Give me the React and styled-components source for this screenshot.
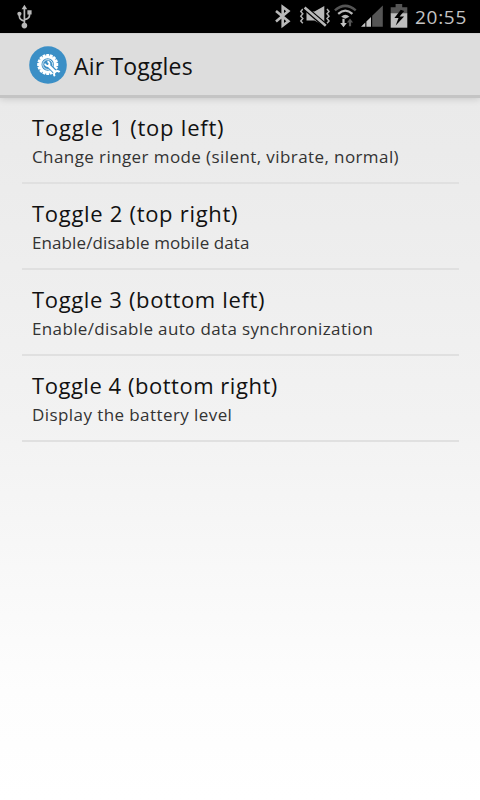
import React from "react";
import styled, { createGlobalStyle } from "styled-components";

const GlobalStyle = createGlobalStyle`
  * { box-sizing: border-box; }
  body { margin: 0; background: #fff; }
`;

const Screen = styled.div`
  width: 480px;
  height: 800px;
  display: flex;
  flex-direction: column;
  overflow: hidden;
  font-family: "Open Sans", "Noto Sans", sans-serif;
  background: linear-gradient(#e8e8e8 0, #ebebeb 150px, #f2f2f2 420px, #fdfdfd 690px, #fff 800px);
`;

const StatusBar = styled.header`
  height: 33px;
  flex: none;
  display: flex;
  align-items: flex-start;
  background: #000;
  color: #c4c4c4;
`;

const StatusIcon = styled.svg`
  display: block;
  flex: none;
  width: ${(p) => p.$w}px;
  height: 33px;
  margin-left: ${(p) => p.$gap || 0}px;
`;

const Spacer = styled.div`
  flex: 1;
`;

const Clock = styled.time`
  width: 71px;
  padding-left: 6px;
  font-size: 19px;
  line-height: 34px;
  letter-spacing: 0.7px;
  white-space: nowrap;
`;

const ActionBar = styled.div`
  height: 65px;
  flex: none;
  display: flex;
  align-items: center;
  gap: 7px;
  padding-left: 29px;
  background: #dddddd;
  border-top: 1px solid #d2d2d2;
  border-bottom: 3px solid #c4c4c4;
  box-shadow: 0 1px 7px rgba(0, 0, 0, 0.15);
`;

const AppIcon = styled.svg`
  display: block;
  width: 38px;
  height: 38px;
`;

const Title = styled.h1`
  margin: 2px 0 0;
  font-size: 23px;
  font-weight: 400;
  line-height: 32px;
  letter-spacing: ${(p) => p.$track}px;
  color: #111;
  white-space: nowrap;
`;

const List = styled.ul`
  list-style: none;
  margin: 0;
  padding: 0 21px 0 22px;
`;

const Row = styled.li`
  height: 86px;
  padding: 14px 10px 0;
  border-bottom: 2px solid #e0e0e0;
`;

const Name = styled.div`
  font-size: 22px;
  line-height: 30px;
  letter-spacing: ${(p) => p.$track}px;
  color: #111;
  white-space: nowrap;
`;

const Summary = styled.div`
  font-size: 17px;
  line-height: 30px;
  letter-spacing: ${(p) => p.$track}px;
  color: #333;
  white-space: nowrap;
`;

const toggles = [
  { name: "Toggle 1 (top left)", nt: 0.78, text: "Change ringer mode (silent, vibrate, normal)", st: 0.41 },
  { name: "Toggle 2 (top right)", nt: 0.7, text: "Enable/disable mobile data", st: 0.1 },
  { name: "Toggle 3 (bottom left)", nt: 0.64, text: "Enable/disable auto data synchronization", st: 0.36 },
  { name: "Toggle 4 (bottom right)", nt: 0.53, text: "Display the battery level", st: 0.42 },
];

const teeth = Array.from({ length: 16 }, (_, i) => i * 22.5);

function Usb() {
  return (
    <StatusIcon $w={18} $gap={16} viewBox="16 0 18 33" fill="none" stroke="#b9b9b9" strokeWidth="1.7">
      <path d="M24.4 8v17M19.4 14v2.5q0 3 5 4.7M29.5 13v2.5q0 3-5 4.2" />
      <path d="M24.4 4.8l2.8 4.4h-5.6z" fill="#b9b9b9" stroke="none" />
      <circle cx="19.4" cy="13.8" r="2.1" fill="#b9b9b9" stroke="none" />
      <path d="M27.4 10.2h4.2v4.2h-4.2z" fill="#b9b9b9" stroke="none" />
      <circle cx="24.4" cy="25.6" r="2.8" fill="#b9b9b9" stroke="none" />
    </StatusIcon>
  );
}

function Bluetooth() {
  return (
    <StatusIcon $w={20} viewBox="273 0 20 33" fill="none" stroke="#b9b9b9" strokeWidth="2.6">
      <path d="M276 11l12.4 10.2-5.7 4.4V6.9l5.7 4.2L276 21.6" />
    </StatusIcon>
  );
}

function Silent() {
  return (
    <StatusIcon $w={36} $gap={4} viewBox="297 0 36 33">
      <path d="M302.8 9l-2 2.4 2 2.4-2 2.4 2 2.4-2 2.4 2 2.2M327 9l2 2.4-2 2.4 2 2.4-2 2.4 2 2.4-2 2.2" fill="none" stroke="#b0b0b0" strokeWidth="1.5" />
      <path d="M306.5 11.6h8l9.8-5.5v20l-9.8-5.5h-8z" fill="#b9b9b9" />
      <path d="M304.6 7.6l21.2 18.2" stroke="#000" strokeWidth="5" />
      <path d="M304.6 7.6l21.2 18.2" stroke="#b9b9b9" strokeWidth="2.6" />
    </StatusIcon>
  );
}

function Wifi() {
  return (
    <StatusIcon $w={26} viewBox="333 0 26 33" fill="none">
      <path d="M334.9 10.4q10.4-9 20.8 0" stroke="#555" strokeWidth="2.5" />
      <path d="M338.2 13.9q7.1-6.4 14.2 0" stroke="#b9b9b9" strokeWidth="2.2" />
      <path d="M341.2 16.7q4.1-4 8.2 0l-4.1 2z" fill="#b9b9b9" />
      <path d="M342.4 18.7h2.2v4.2h2.2l-3.3 4.4-3.3-4.4h2.2z" fill="#c4c4c4" />
      <path d="M348.9 26.3h2.2v-3.8h2l-3.1-4-3.1 4h2z" fill="#555" />
    </StatusIcon>
  );
}

function Signal() {
  return (
    <StatusIcon $w={24} $gap={1} viewBox="360 0 24 33">
      <path d="M372.2 15.7L382.8 5.5v21.3h-10.6z" fill="#555" />
      <path d="M361 26.8l4.3-4.3v4.3zM366.4 21.4l4.6-4.5v9.9h-4.6z" fill="#c4c4c4" />
    </StatusIcon>
  );
}

function Battery() {
  return (
    <StatusIcon $w={20} $gap={5} viewBox="389 0 20 33">
      <path d="M395.6 4h6.6v3.2h5.1v6.2h-16.6V7.2h4.9z" fill="#555" />
      <path d="M390.7 13.2h16.6v14.5h-16.6z" fill="#bdbdbd" />
      <path d="M400.8 9.8l-6.4 8.2 4.1-.1-2.8 7.5 8.4-8.8-4.5-.1 4.6-5.6z" fill="#000" />
    </StatusIcon>
  );
}

function Logo() {
  return (
    <AppIcon viewBox="0 0 38 38">
      <circle cx="19" cy="19" r="18.8" fill="#3b8fc6" />
      <g fill="#fff">
        {teeth.map((a) => (
          <path key={a} d="M17.3 8h2.8l.4 3h-3.6z" transform={`rotate(${a} 18.7 18.5)`} />
        ))}
      </g>
      <circle cx="18.7" cy="18.5" r="7.4" fill="none" stroke="#fff" strokeWidth="2.4" />
      <circle cx="18.7" cy="18.5" r="4.9" fill="none" stroke="#fff" strokeWidth=".8" />
      <g fill="none">
        <path d="M20 19.8l7 7" stroke="#3b8fc6" strokeWidth="5" />
        <path d="M19 19l7.5 7.5" stroke="#fff" strokeWidth="2.8" />
        <path d="M15.9 17.6a2.8 2.8 0 0 0 4.1 2 2.8 2.8 0 0 0-1.6-4.3" stroke="#fff" strokeWidth="1.8" />
        <path d="M25.8 30.2a3 3 0 0 1 .3-4.3 3 3 0 0 1 4.5.3" stroke="#fff" strokeWidth="2" />
      </g>
    </AppIcon>
  );
}

export default function App() {
  return (
    <>
      <GlobalStyle />
      <Screen>
        <StatusBar>
          <Usb />
          <Spacer />
          <Bluetooth />
          <Silent />
          <Wifi />
          <Signal />
          <Battery />
          <Clock>20:55</Clock>
        </StatusBar>
        <ActionBar>
          <Logo />
          <Title $track={0.17}>Air Toggles</Title>
        </ActionBar>
        <List>
          {toggles.map((t) => (
            <Row key={t.name}>
              <Name $track={t.nt}>{t.name}</Name>
              <Summary $track={t.st}>{t.text}</Summary>
            </Row>
          ))}
        </List>
      </Screen>
    </>
  );
}
